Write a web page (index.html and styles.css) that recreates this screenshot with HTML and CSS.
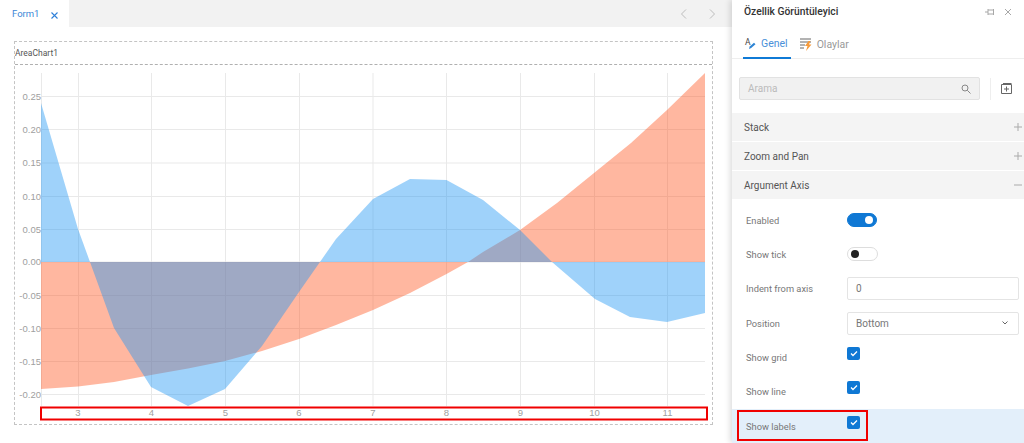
FILE: index.html
```html
<!DOCTYPE html>
<html lang="en">
<head>
    <meta charset="UTF-8">
    <title>Form Designer</title>
    <link rel="stylesheet" href="styles.css">
</head>
<body>
    <div class="designer">
        <div class="tabbar">
            <div class="doc-tab">
                <span>Form1</span>
                <svg class="doc-close" width="7" height="7" viewBox="0 0 7 7"><path d="M.5 .5l6 6M6.5 .5l-6 6"/></svg>
            </div>
            <div class="tab-nav">
                <svg width="9" height="12" viewBox="0 0 9 12"><path d="M7 1.5L2.5 6 7 10.5"/></svg>
                <svg width="9" height="12" viewBox="0 0 9 12"><path d="M2 1.5L6.5 6 2 10.5"/></svg>
            </div>
        </div>

        <div class="frame">
            <div class="frame-title">AreaChart1</div>
            <svg class="chart" width="697" height="359" viewBox="15 65 697 359">
                <g class="grid">
                    <path d="M41 96.5H705M41 129.5H705M41 163H705M41 196.5H705M41 229.5H705M41 262H705M41 295.5H705M41 328.5H705M41 361.5H705M41 394.5H705"/>
                    <path d="M41.5 73V406M78.5 73V406M151.5 73V406M225.5 73V406M299.5 73V406M373 73V406M446.5 73V406M520.5 73V406M594.5 73V406M667.5 73V406"/>
                </g>
                <polygon class="area-orange" points="41,262 41,389 78,386.5 114,382 151,375 188,368.5 225,361 262,351 299,339 336,325 373,310 410,293 446.5,274 468,262 483,252 520,230 557,203 594,173 631,143 667,110 705,73 705,262"/>
                <polygon class="area-blue" points="41,262 41,103 78,229 114,328 151,387 188,406 225,389 262,346 299,292 336,239 373,199 410,179 446.5,180 483,200 520,230 552,262 595,299 630,317 667,322 705,313 705,262"/>
                <g class="y-labels">
                    <text x="41" y="99.5">0.25</text>
                    <text x="41" y="132.5">0.20</text>
                    <text x="41" y="166">0.15</text>
                    <text x="41" y="199.5">0.10</text>
                    <text x="41" y="232.5">0.05</text>
                    <text x="41" y="265">0.00</text>
                    <text x="41" y="298.5">-0.05</text>
                    <text x="41" y="331.5">-0.10</text>
                    <text x="41" y="364.5">-0.15</text>
                    <text x="41" y="397.5">-0.20</text>
                </g>
                <g class="x-labels">
                    <text x="78" y="415.5">3</text>
                    <text x="151.5" y="415.5">4</text>
                    <text x="225.5" y="415.5">5</text>
                    <text x="299" y="415.5">6</text>
                    <text x="373" y="415.5">7</text>
                    <text x="446.5" y="415.5">8</text>
                    <text x="520.5" y="415.5">9</text>
                    <text x="594.5" y="415.5">10</text>
                    <text x="667.5" y="415.5">11</text>
                </g>
                <rect class="marker" x="41" y="407.5" width="666" height="12"/>
            </svg>
        </div>
    </div>

    <aside class="props">
        <div class="props-head">
            <h2>Özellik Görüntüleyici</h2>
            <div class="head-icons">
                <svg width="10" height="8" viewBox="0 0 10 8"><path d="M0 4h3M3 1v6M3 2h5.5v4H3M8.5 1v6"/></svg>
                <svg width="8" height="8" viewBox="0 0 8 8"><path d="M1 1l6 6M7 1l-6 6"/></svg>
            </div>
        </div>

        <div class="props-tabs">
            <div class="props-tab active">
                <svg width="12" height="13" viewBox="0 0 12 13">
                    <text class="icon-a" x="1" y="8">A</text>
                    <path class="icon-pen" d="M5 12l.7-2.4 4.3-3.8 1.5 1.4-4.3 3.8z"/>
                </svg>
                <span>Genel</span>
            </div>
            <div class="props-tab">
                <svg width="12" height="13" viewBox="0 0 12 13">
                    <path class="icon-lines" d="M0 1h11M0 4h11M0 7h5M0 10h4"/>
                    <path class="icon-bolt" d="M8.5 3L5 8h2.5L6 13l5.5-6.5H9L10.5 3z"/>
                </svg>
                <span>Olaylar</span>
            </div>
        </div>

        <div class="search-row">
            <div class="search">
                <span>Arama</span>
                <svg width="10" height="10" viewBox="0 0 10 10"><circle cx="4" cy="4" r="3"/><path d="M6.3 6.3L9.5 9.5"/></svg>
            </div>
            <div class="search-sep"></div>
            <svg class="expand-all" width="11" height="11" viewBox="0 0 11 11"><path d="M.5 1.5h10v9H.5zM2 .5h8.5M5.5 3.5v5M3 6h5"/></svg>
        </div>

        <div class="section">Stack<svg width="8" height="8" viewBox="0 0 8 8"><path d="M4 0v8M0 4h8"/></svg></div>
        <div class="section">Zoom and Pan<svg width="8" height="8" viewBox="0 0 8 8"><path d="M4 0v8M0 4h8"/></svg></div>
        <div class="section">Argument Axis<svg width="8" height="8" viewBox="0 0 8 8"><path d="M0 4h8"/></svg></div>

        <div class="rows">
            <div class="row">
                <label>Enabled</label>
                <div class="toggle on"></div>
            </div>
            <div class="row">
                <label>Show tick</label>
                <div class="toggle"></div>
            </div>
            <div class="row">
                <label>Indent from axis</label>
                <div class="field">0</div>
            </div>
            <div class="row">
                <label>Position</label>
                <div class="field">Bottom
                    <svg width="6" height="4" viewBox="0 0 6 4"><path d="M.5 .5L3 3 5.5 .5"/></svg>
                </div>
            </div>
            <div class="row">
                <label>Show grid</label>
                <div class="check"><svg width="8" height="7" viewBox="0 0 8 7"><path d="M1 3.5L3 5.5 7 1.5"/></svg></div>
            </div>
            <div class="row">
                <label>Show line</label>
                <div class="check"><svg width="8" height="7" viewBox="0 0 8 7"><path d="M1 3.5L3 5.5 7 1.5"/></svg></div>
            </div>
            <div class="row selected">
                <label>Show labels</label>
                <div class="check"><svg width="8" height="7" viewBox="0 0 8 7"><path d="M1 3.5L3 5.5 7 1.5"/></svg></div>
                <div class="row-marker"></div>
            </div>
        </div>
    </aside>
</body>
</html>
```

FILE: styles.css
```css
html, body {
    height: 100%;
    margin: 0;
    overflow: hidden;
}

body {
    display: flex;
    background-color: #fff;
    font-family: Roboto, "Open Sans", sans-serif;
    color: #666;
}

svg {
    display: block;
    fill: none;
    overflow: visible;
}

.designer {
    flex: 1;
    min-width: 0;
}

.tabbar {
    display: flex;
    justify-content: space-between;
    height: 27px;
    background-color: #f2f2f2;
}

.doc-tab {
    display: flex;
    align-items: center;
    gap: 12px;
    width: 69px;
    box-sizing: border-box;
    padding: 0 0 0 12px;
    background-color: #fff;
    font-size: 9.5px;
    color: #3b86d6;
}

.doc-tab span {
    width: 27px;
}

.doc-close {
    stroke: #2f80d8;
    stroke-width: 1.1;
    margin-top: 3px;
}

.tab-nav {
    display: flex;
    align-items: center;
    gap: 20px;
    padding-right: 15px;
}

.tab-nav svg {
    stroke: #bdbdbd;
}

.frame {
    width: 699px;
    height: 384px;
    box-sizing: border-box;
    margin: 14px 0 0 14px;
    border: 1px dashed #c4c4c4;
}

.frame-title {
    height: 23px;
    box-sizing: border-box;
    padding-top: 6px;
    border-bottom: 1px dashed #b0b0b0;
    font-size: 8.5px;
    color: #555;
}

.grid path {
    stroke: #e9e9e9;
    stroke-width: 1;
}

.area-orange {
    fill: #ff5722;
    fill-opacity: 0.43;
}

.area-blue {
    fill: #2196f3;
    fill-opacity: 0.43;
}

.y-labels text,
.x-labels text {
    font-family: "Liberation Sans", sans-serif;
    font-size: 9.5px;
    fill: #a0a0a0;
}

.y-labels text {
    text-anchor: end;
}

.x-labels text {
    text-anchor: middle;
}

.marker {
    stroke: #f00000;
    stroke-width: 2;
}

.props {
    width: 292px;
    flex-shrink: 0;
    background-color: #fff;
    box-shadow: -2px 0 6px rgba(0, 0, 0, 0.14);
    z-index: 1;
}

.props-head {
    display: flex;
    justify-content: space-between;
    align-items: center;
    height: 23px;
    padding: 0 12px 0 12px;
}

.props-head h2 {
    margin: 0;
    font-size: 10.3px;
    font-weight: 500;
    color: #333;
}

.head-icons {
    display: flex;
    align-items: center;
    gap: 9px;
}

.head-icons svg {
    stroke: #a8a8a8;
}

.props-tabs {
    display: flex;
    gap: 8px;
    height: 36px;
    box-sizing: border-box;
    padding-left: 11px;
    border-bottom: 1px solid #eee;
}

.props-tab {
    display: flex;
    align-items: center;
    gap: 5px;
    height: 36px;
    box-sizing: border-box;
    padding: 6px 3px 0 1px;
    font-size: 10.5px;
    color: #999;
}

.props-tab.active {
    border-bottom: 2px solid #0f7ad6;
    color: #4a90d9;
}

.icon-a {
    font-size: 8.5px;
    fill: #444;
}

.icon-pen {
    fill: #2d84d4;
}

.icon-lines {
    stroke: #666;
}

.icon-bolt {
    fill: #f59b3c;
}

.search-row {
    display: flex;
    align-items: center;
    height: 23px;
    margin: 18px 0 13px 7px;
}

.search {
    display: flex;
    justify-content: space-between;
    align-items: center;
    width: 241px;
    height: 23px;
    box-sizing: border-box;
    padding: 0 8px;
    border: 1px solid #e2e2e2;
    border-radius: 2px;
    background-color: #f1f1f1;
    font-size: 10px;
    color: #bbb;
}

.search svg {
    stroke: #888;
}

.search-sep {
    width: 1px;
    height: 22px;
    margin: 0 10px;
    background-color: #eee;
}

.expand-all {
    stroke: #666;
}

.section {
    display: flex;
    justify-content: space-between;
    align-items: center;
    height: 28px;
    margin-bottom: 1px;
    padding: 0 2px 0 12px;
    background-color: #f4f4f4;
    font-size: 10px;
    color: #555;
}

.section svg {
    stroke: #aaa;
}

.rows {
    padding-top: 3px;
}

.row {
    position: relative;
    display: flex;
    align-items: center;
    height: 34.33px;
    padding: 0 5px 0 14px;
}

.row label {
    width: 101px;
    flex-shrink: 0;
    font-size: 9.3px;
    color: #777;
}

.row.selected {
    background-color: #e3effa;
}

.row-marker {
    position: absolute;
    left: 5px;
    top: 1px;
    width: 131px;
    height: 31px;
    box-sizing: border-box;
    border: 2px solid #f00000;
}

.toggle {
    position: relative;
    width: 31px;
    height: 14px;
    box-sizing: border-box;
    border: 1px solid #ddd;
    border-radius: 7px;
    background-color: #fff;
}

.toggle::after {
    content: "";
    position: absolute;
    left: 3px;
    top: 2px;
    width: 8px;
    height: 8px;
    border-radius: 50%;
    background-color: #222;
}

.toggle.on {
    width: 30px;
    border-color: #0f78d4;
    background-color: #0f78d4;
}

.toggle.on::after {
    left: auto;
    right: 3px;
    background-color: #fff;
}

.field {
    flex: 1;
    display: flex;
    justify-content: space-between;
    align-items: center;
    height: 23px;
    box-sizing: border-box;
    padding: 0 10px 0 8px;
    border: 1px solid #e4e4e4;
    border-radius: 2px;
    background-color: #fff;
    font-size: 10px;
    color: #777;
}

.field svg {
    stroke: #666;
}

.check {
    display: flex;
    justify-content: center;
    align-items: center;
    width: 13px;
    height: 13px;
    margin-bottom: 8px;
    border-radius: 2px;
    background-color: #0f78d4;
}

.check svg {
    stroke: #fff;
    stroke-width: 1.3;
}
```
